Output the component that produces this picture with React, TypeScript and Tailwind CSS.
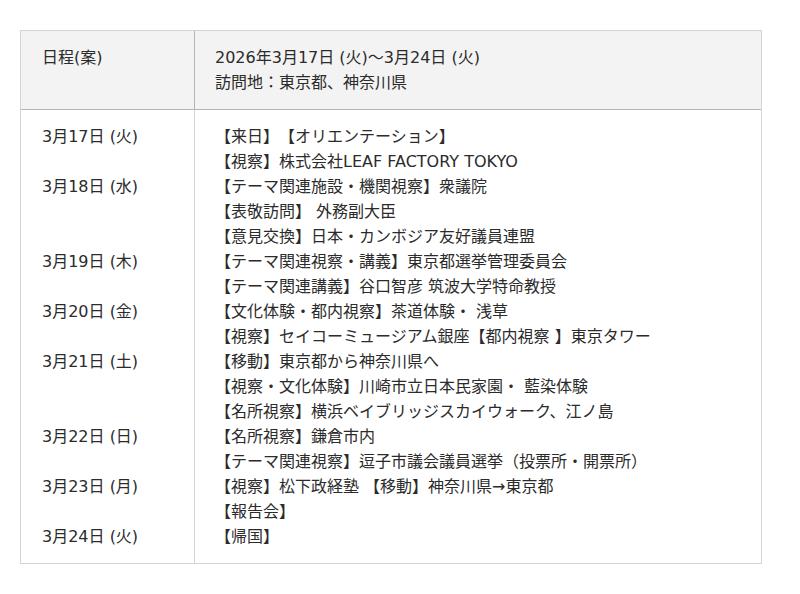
const days: { date: string; items: string[] }[] = [
  {
    date: "3月17日 (火)",
    items: ["【来日】【オリエンテーション】", "【視察】株式会社LEAF FACTORY TOKYO"],
  },
  {
    date: "3月18日 (水)",
    items: [
      "【テーマ関連施設・機関視察】衆議院",
      "【表敬訪問】 外務副大臣",
      "【意見交換】日本・カンボジア友好議員連盟",
    ],
  },
  {
    date: "3月19日 (木)",
    items: [
      "【テーマ関連視察・講義】東京都選挙管理委員会",
      "【テーマ関連講義】谷口智彦 筑波大学特命教授",
    ],
  },
  {
    date: "3月20日 (金)",
    items: [
      "【文化体験・都内視察】茶道体験・ 浅草",
      "【視察】セイコーミュージアム銀座【都内視察 】東京タワー",
    ],
  },
  {
    date: "3月21日 (土)",
    items: [
      "【移動】東京都から神奈川県へ",
      "【視察・文化体験】川崎市立日本民家園・ 藍染体験",
      "【名所視察】横浜ベイブリッジスカイウォーク、江ノ島",
    ],
  },
  {
    date: "3月22日 (日)",
    items: ["【名所視察】鎌倉市内", "【テーマ関連視察】逗子市議会議員選挙（投票所・開票所）"],
  },
  {
    date: "3月23日 (月)",
    items: ["【視察】松下政経塾 【移動】神奈川県→東京都", "【報告会】"],
  },
  { date: "3月24日 (火)", items: ["【帰国】"] },
];

export default function App() {
  return (
    <div className="min-h-[594px] bg-white pt-[30px] pl-[20px] font-['DejaVu_Sans','Noto_Sans_CJK_JP',sans-serif] text-[16px] leading-[25px] text-[#2b2b2b] [text-spacing-trim:space-all]">
      <div className="grid w-[742px] grid-cols-[174px_1fr] border border-[#d4d4d4]">
        <div className="border-r border-b border-[#b4b4b4] bg-[#f3f3f3] py-[14px] pl-[21px]">
          日程(案)
        </div>
        <div className="border-b border-[#b4b4b4] bg-[#f3f3f3] py-[14px] pl-[20px]">
          <div>2026年3月17日 (火)～3月24日 (火)</div>
          <div>訪問地：東京都、神奈川県</div>
        </div>
        <div className="border-r border-[#d4d4d4] py-[14px] pl-[21px]">
          {days.map((d) => (
            <div key={d.date}>
              <div>{d.date}</div>
              {d.items.slice(1).map((_, i) => (
                <div key={i}>&nbsp;</div>
              ))}
            </div>
          ))}
        </div>
        <div className="py-[14px] pl-[20px]">
          {days.map((d) =>
            d.items.map((item, i) => <div key={d.date + i}>{item}</div>)
          )}
        </div>
      </div>
    </div>
  );
}
